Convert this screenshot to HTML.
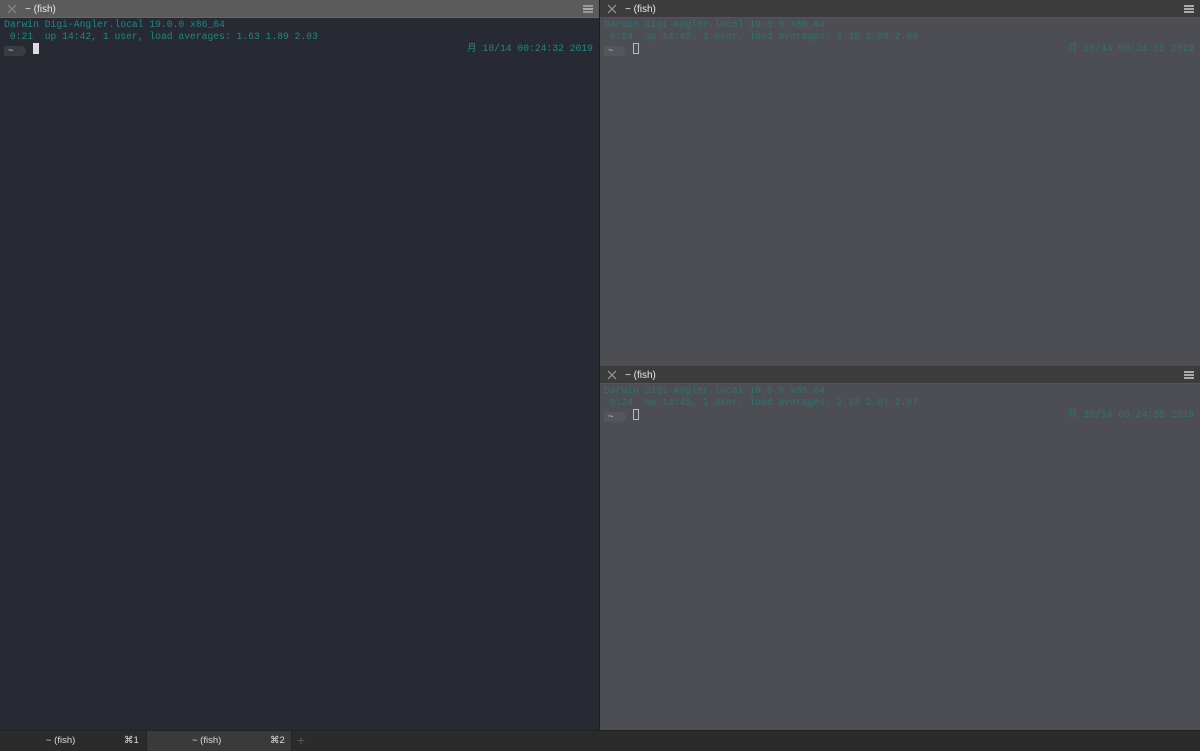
<!DOCTYPE html>
<html><head><meta charset="utf-8"><style>
*{margin:0;padding:0;box-sizing:border-box}
body{width:1200px;height:750px;overflow:hidden;background:#2a2a2a;font-family:"Liberation Sans",sans-serif;position:relative}
.pane{position:absolute}
.title{position:absolute;left:0;right:0;top:0;height:18px;font-size:10px;color:#e8e8e8;border-bottom:1px solid #666}
.title .x{position:absolute;left:7px;top:4px;width:10px;height:10px}
.title .t{position:absolute;left:25px;top:4px}
.title .m{position:absolute;right:6px;top:5px;width:10px;height:8px;border-top:2px solid #aaa;border-bottom:2px solid #aaa}
.title .m:after{content:"";position:absolute;left:0;right:0;top:1px;height:2px;background:#aaa}
.term{position:absolute;left:4px;top:19px;right:6px;font-family:"Liberation Mono","Noto Sans CJK JP",monospace;font-size:9.7px;line-height:12px;white-space:pre}
.r{position:absolute;right:0;top:24px}
.pr{display:inline-block;width:22px;height:10px;border-radius:0 5px 5px 0;vertical-align:-1px;font-size:9px;line-height:10px;padding-left:4px}
.cur{display:inline-block;width:6px;height:11px;vertical-align:-2px;margin-left:7px}
</style></head><body>
<div class="pane" style="left:0;top:0;width:599px;height:730px;background:#272a33">
 <div class="title" style="background:#5b5b5b"><svg class="x" viewBox="0 0 10 10"><path d="M1 1L9 9M9 1L1 9" stroke="#888" stroke-width="1.2"/></svg><span class="t">~ (fish)</span><span class="m" style="border-color:#999"></span></div>
 <div class="term" style="color:#23857f">Darwin Digi-Angler.local 19.0.0 x86_64
 0:21  up 14:42, 1 user, load averages: 1.63 1.89 2.03
<span class="pr" style="background:#3a3c42;color:#ddd">~</span><span class="cur" style="background:#ddd"></span><span class="r">月 10/14 00:24:32 2019</span></div>
</div>
<div style="position:absolute;left:599px;top:0;width:1px;height:730px;background:#1e1e1e"></div>
<div class="pane" style="left:600px;top:0;width:600px;height:366px;background:#4d4e53">
 <div class="title" style="background:#3c3c3c;border-color:#555"><svg class="x" viewBox="0 0 10 10"><path d="M1 1L9 9M9 1L1 9" stroke="#999" stroke-width="1.2"/></svg><span class="t">~ (fish)</span><span class="m"></span></div>
 <div class="term" style="color:#33716e">Darwin Digi-Angler.local 19.0.0 x86_64
 0:24  up 14:45, 1 user, load averages: 2.35 2.08 2.08
<span class="pr" style="background:#55565b;color:#ccc">~</span><span class="cur" style="border:1px solid #bbb"></span><span class="r">月 10/14 00:24:35 2019</span></div>
</div>
<div class="pane" style="left:600px;top:366px;width:600px;height:364px;background:#4d4e53">
 <div class="title" style="background:#3c3c3c;border-color:#555"><svg class="x" viewBox="0 0 10 10"><path d="M1 1L9 9M9 1L1 9" stroke="#999" stroke-width="1.2"/></svg><span class="t">~ (fish)</span><span class="m"></span></div>
 <div class="term" style="color:#33716e">Darwin Digi-Angler.local 19.0.0 x86_64
 0:24  up 14:45, 1 user, load averages: 2.24 2.07 2.07
<span class="pr" style="background:#55565b;color:#ccc">~</span><span class="cur" style="border:1px solid #bbb"></span><span class="r">月 10/14 00:24:35 2019</span></div>
</div>
<div style="position:absolute;left:0;top:730px;width:1200px;height:20px;background:#2b2b2b;border-top:1px solid #222;font-size:9.5px;color:#ddd">
 <div style="position:absolute;left:0;top:0;width:146px;height:20px"><span style="position:absolute;left:46px;top:4px">~ (fish)</span><span style="position:absolute;left:124px;top:4px">⌘1</span></div>
 <div style="position:absolute;left:146px;top:0;width:146px;height:20px;background:#3a3a3a;border-left:1px solid #222;border-right:1px solid #222"><span style="position:absolute;left:45px;top:4px">~ (fish)</span><span style="position:absolute;left:123px;top:4px">⌘2</span></div>
 <span style="position:absolute;left:297px;top:1px;font-size:14px;color:#555">+</span>
</div>
</body></html>
